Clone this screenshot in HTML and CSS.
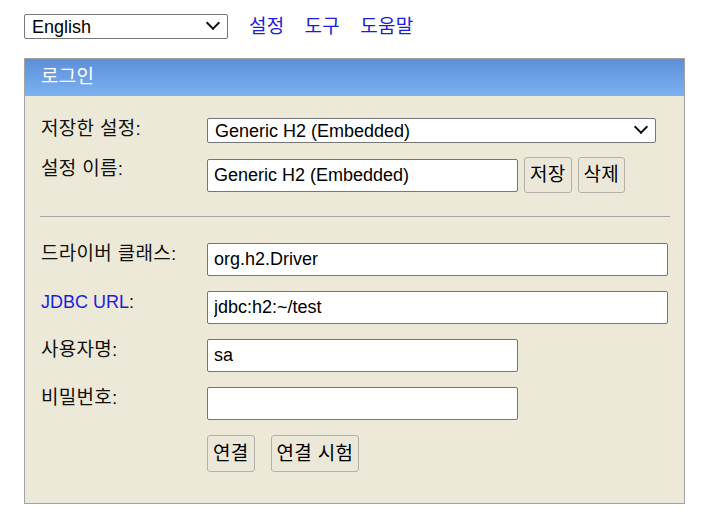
FILE: index.html
```html
<!DOCTYPE html>
<html lang="ko">
<head>
<meta charset="utf-8">
<title>H2 Console</title>
<link rel="stylesheet" href="styles.css">
</head>
<body>
<div class="page">
  <div class="top">
    <span class="select-wrap lang-wrap">
      <select class="select lang"><option>English</option></select>
    </span>
    <nav class="links">
      <a class="ko" href="#">설정</a>
      <a class="ko" href="#">도구</a>
      <a class="ko" href="#">도움말</a>
    </nav>
  </div>
  <div class="panel">
    <div class="panel-head ko">로그인</div>
    <div class="panel-body">
      <div class="row row-first">
        <label class="lbl ko">저장한 설정:</label>
        <span class="select-wrap saved-wrap">
          <select class="select saved"><option>Generic H2 (Embedded)</option></select>
        </span>
      </div>
      <div class="row row-name">
        <label class="lbl ko">설정 이름:</label>
        <input class="field w-mid" type="text" value="Generic H2 (Embedded)">
        <button class="btn btn-side ko">저장</button>
        <button class="btn btn-side ko">삭제</button>
      </div>
      <hr class="sep">
      <div class="row">
        <label class="lbl ko">드라이버 클래스:</label>
        <input class="field w-full" type="text" value="org.h2.Driver">
      </div>
      <div class="row">
        <label class="lbl"><a class="lbl-link" href="#">JDBC URL</a>:</label>
        <input class="field w-full" type="text" value="jdbc:h2:~/test">
      </div>
      <div class="row">
        <label class="lbl ko">사용자명:</label>
        <input class="field w-mid" type="text" value="sa">
      </div>
      <div class="row">
        <label class="lbl ko">비밀번호:</label>
        <input class="field w-mid" type="password" value="">
      </div>
      <div class="row row-actions">
        <span class="lbl"></span>
        <button class="btn btn-main ko">연결</button>
        <button class="btn btn-main btn-gap ko">연결 시험</button>
      </div>
    </div>
  </div>
</div>
</body>
</html>
```

FILE: styles.css
```css
* { box-sizing: border-box; }

body {
  margin: 0;
  background: #fff;
  color: #000;
  font-family: "Liberation Sans", "Noto Sans CJK KR", sans-serif;
  font-size: 18px;
}

.ko {
  font-size: 19px;
  letter-spacing: 0.3px;
}

.page {
  padding: 14px 0 0 24px;
}

.top {
  display: flex;
  align-items: center;
  height: 25px;
}

.select-wrap {
  position: relative;
  display: inline-block;
  height: 25px;
}

.select-wrap::after {
  content: "";
  position: absolute;
  right: 10px;
  top: 4px;
  width: 8px;
  height: 8px;
  border-right: 2px solid #111;
  border-bottom: 2px solid #111;
  transform: rotate(45deg);
  pointer-events: none;
}

.select {
  -webkit-appearance: none;
  appearance: none;
  display: block;
  height: 25px;
  font-family: inherit;
  font-size: 18px;
  line-height: 21px;
  color: #000;
  background: #fff;
  border: 1px solid #767676;
  border-radius: 2px;
  padding: 2px 0 0 7px;
}

.lang { width: 204px; }
.saved { width: 449px; }

.links {
  display: flex;
  gap: 20px;
  margin-left: 21px;
}

.links a {
  color: #1c1ce0;
  text-decoration: none;
  line-height: 22px;
}

.panel {
  margin-top: 19px;
  width: 661px;
  border: 1px solid #a3a3a3;
  background: #ece9d8;
}

.panel-head {
  height: 37px;
  line-height: 35px;
  padding-left: 16px;
  color: #fff;
  background: linear-gradient(#5d8fd9, #7cb1f1);
}

.panel-body {
  padding: 22px 15px 31px 16px;
}

.row {
  display: flex;
  align-items: flex-start;
  margin-bottom: 15px;
}

.row-first {
  margin-bottom: 14px;
}

.row-name {
  align-items: center;
  margin-bottom: 0;
}

.row-name .lbl {
  align-self: flex-start;
  margin-top: 1px;
}

.row-actions {
  margin-bottom: 0;
}

.lbl {
  flex: none;
  width: 166px;
  line-height: 22px;
  color: #111;
}

.lbl-link {
  color: #1c1ce0;
  text-decoration: none;
}

.field {
  height: 33px;
  font-family: inherit;
  font-size: 18px;
  color: #000;
  background: #fff;
  border: 1px solid #767676;
  border-radius: 2px;
  padding: 0 6px;
  outline: none;
}

.w-full { width: 461px; }
.w-mid { width: 311px; }

.btn {
  height: 36px;
  padding: 0 5px;
  font-family: inherit;
  line-height: 22px;
  color: #000;
  background: #ebe8da;
  border: 1px solid #b4b2a8;
  border-radius: 3px;
}

.btn-main { height: 37px; }
.btn-side { margin-left: 6px; }
.btn-gap { margin-left: 16px; }

.sep {
  height: 0;
  border: 0;
  border-top: 1px solid #a5a5a5;
  margin: 23px -1px 26px -1px;
}
```
